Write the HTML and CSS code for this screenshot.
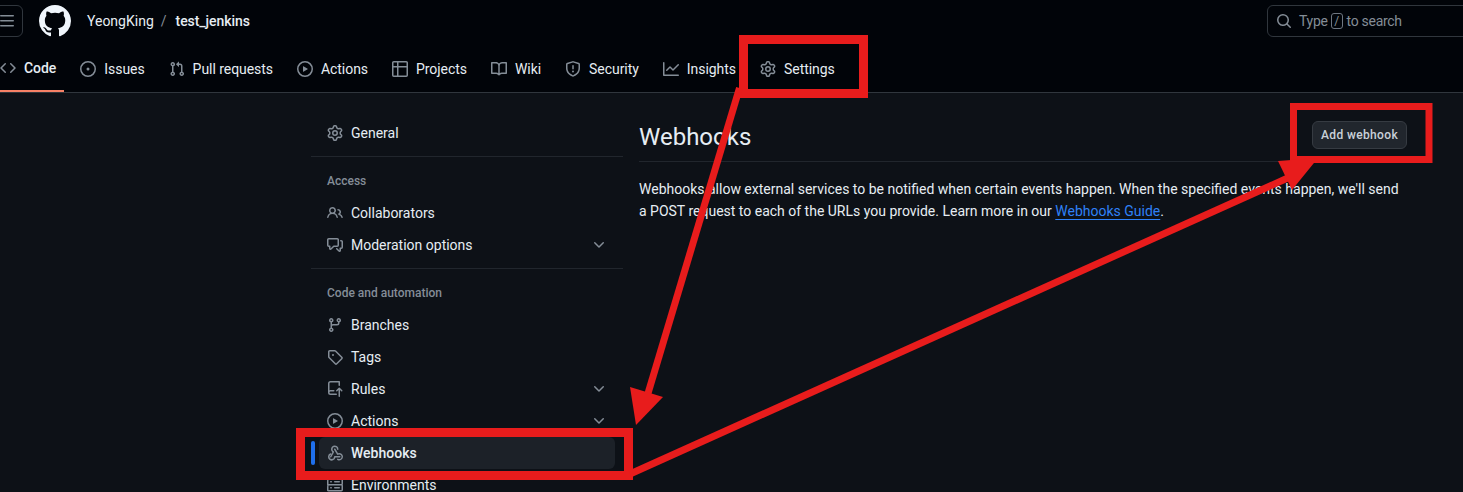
FILE: index.html
```html
<!DOCTYPE html>
<html lang="en">
<head>
  <meta charset="UTF-8">
  <title>Webhooks · YeongKing/test_jenkins</title>
  <link rel="stylesheet" href="styles.css">
</head>
<body>
  <!-- Icon sprite -->
  <svg class="sprite" width="0" height="0">
    <symbol id="i-bars" viewBox="0 0 16 16"><path d="M1 2.75A.75.75 0 0 1 1.75 2h12.5a.75.75 0 0 1 0 1.5H1.75A.75.75 0 0 1 1 2.75Zm0 5A.75.75 0 0 1 1.75 7h12.5a.75.75 0 0 1 0 1.5H1.75A.75.75 0 0 1 1 7.75ZM1.75 12h12.5a.75.75 0 0 1 0 1.5H1.75a.75.75 0 0 1 0-1.5Z"/></symbol>
    <symbol id="i-github" viewBox="0 0 16 16"><path d="M8 0c4.42 0 8 3.58 8 8a8.013 8.013 0 0 1-5.45 7.59c-.4.08-.55-.17-.55-.38 0-.27.01-1.13.01-2.2 0-.75-.25-1.23-.54-1.48 1.78-.2 3.65-.88 3.65-3.95 0-.88-.31-1.59-.82-2.15.08-.2.36-1.02-.08-2.12 0 0-.67-.22-2.2.82-.64-.18-1.32-.27-2-.27-.68 0-1.36.09-2 .27-1.53-1.03-2.2-.82-2.2-.82-.44 1.1-.16 1.92-.08 2.12-.51.56-.82 1.28-.82 2.15 0 3.06 1.86 3.75 3.64 3.95-.23.2-.44.55-.51 1.07-.46.21-1.61.55-2.33-.66-.15-.24-.6-.83-1.23-.82-.67.01-.27.38.01.53.34.19.73.9.82 1.13.16.45.68 1.31 2.69.94 0 .67.01 1.3.01 1.49 0 .21-.15.45-.55.38A7.995 7.995 0 0 1 0 8c0-4.42 3.58-8 8-8Z"/></symbol>
    <symbol id="i-search" viewBox="0 0 16 16"><path d="M10.68 11.74a6 6 0 0 1-7.922-8.982 6 6 0 0 1 8.982 7.922l3.04 3.04a.749.749 0 0 1-.326 1.275.749.749 0 0 1-.734-.215ZM11.5 7a4.499 4.499 0 1 0-8.997 0A4.499 4.499 0 0 0 11.5 7Z"/></symbol>
    <symbol id="i-code" viewBox="0 0 16 16"><path d="m11.28 3.22 4.25 4.25a.75.75 0 0 1 0 1.06l-4.25 4.25a.749.749 0 0 1-1.275-.326.749.749 0 0 1 .215-.734L13.94 8l-3.72-3.72a.749.749 0 0 1 .326-1.275.749.749 0 0 1 .734.215Zm-6.56 0a.751.751 0 0 1 1.042.018.751.751 0 0 1 .018 1.042L2.06 8l3.72 3.72a.749.749 0 0 1-.326 1.275.749.749 0 0 1-.734-.215L.47 8.53a.75.75 0 0 1 0-1.06Z"/></symbol>
    <symbol id="i-issue" viewBox="0 0 16 16"><path d="M8 9.5a1.5 1.5 0 1 0 0-3 1.5 1.5 0 0 0 0 3Z"/><path d="M8 0a8 8 0 1 1 0 16A8 8 0 0 1 8 0ZM1.5 8a6.5 6.5 0 1 0 13 0 6.5 6.5 0 0 0-13 0Z"/></symbol>
    <symbol id="i-pull" viewBox="0 0 16 16"><path d="M1.5 3.25a2.25 2.25 0 1 1 3 2.122v5.256a2.251 2.251 0 1 1-1.5 0V5.372A2.25 2.25 0 0 1 1.5 3.25Zm5.677-.177L9.573.677A.25.25 0 0 1 10 .854V2.5h1A2.5 2.5 0 0 1 13.5 5v5.628a2.251 2.251 0 1 1-1.5 0V5a1 1 0 0 0-1-1h-1v1.646a.25.25 0 0 1-.427.177L7.177 3.427a.25.25 0 0 1 0-.354ZM3.75 2.5a.75.75 0 1 0 0 1.5.75.75 0 0 0 0-1.5Zm0 9.5a.75.75 0 1 0 0 1.5.75.75 0 0 0 0-1.5Zm8.25.75a.75.75 0 1 0 1.5 0 .75.75 0 0 0-1.5 0Z"/></symbol>
    <symbol id="i-play" viewBox="0 0 16 16"><path d="M8 0a8 8 0 1 1 0 16A8 8 0 0 1 8 0ZM1.5 8a6.5 6.5 0 1 0 13 0 6.5 6.5 0 0 0-13 0Zm4.879-2.773 4.264 2.559a.25.25 0 0 1 0 .428l-4.264 2.559A.25.25 0 0 1 6 10.559V5.442a.25.25 0 0 1 .379-.215Z"/></symbol>
    <symbol id="i-table" viewBox="0 0 16 16"><path d="M0 1.75C0 .784.784 0 1.75 0h12.5C15.216 0 16 .784 16 1.75v12.5A1.75 1.75 0 0 1 14.25 16H1.75A1.75 1.75 0 0 1 0 14.25ZM6.5 6.5v8h7.75a.25.25 0 0 0 .25-.25V6.5Zm8-1.5V1.75a.25.25 0 0 0-.25-.25H6.5V5Zm-13 1.5v7.75c0 .138.112.25.25.25H5v-8ZM5 5V1.5H1.75a.25.25 0 0 0-.25.25V5Z"/></symbol>
    <symbol id="i-book" viewBox="0 0 16 16"><path d="M0 1.75A.75.75 0 0 1 .75 1h4.253c1.227 0 2.317.59 3 1.501A3.743 3.743 0 0 1 11.006 1h4.245a.75.75 0 0 1 .75.75v10.5a.75.75 0 0 1-.75.75h-4.507a2.25 2.25 0 0 0-1.591.659l-.622.621a.75.75 0 0 1-1.06 0l-.622-.621A2.25 2.25 0 0 0 5.258 13H.75a.75.75 0 0 1-.75-.75Zm7.251 10.324.004-5.073-.002-2.253A2.25 2.25 0 0 0 5.003 2.5H1.5v9h3.757a3.75 3.75 0 0 1 1.994.574ZM8.755 4.75l-.004 7.322a3.752 3.752 0 0 1 1.992-.572H14.5v-9h-3.495a2.25 2.25 0 0 0-2.25 2.25Z"/></symbol>
    <symbol id="i-shield" viewBox="0 0 16 16"><path d="M7.467.133a1.748 1.748 0 0 1 1.066 0l5.25 1.68A1.75 1.75 0 0 1 15 3.48V7c0 1.566-.32 3.182-1.303 4.682-.983 1.498-2.585 2.813-5.032 3.855a1.697 1.697 0 0 1-1.33 0c-2.447-1.042-4.049-2.357-5.032-3.855C1.32 10.182 1 8.566 1 7V3.48a1.75 1.75 0 0 1 1.217-1.667Zm.61 1.429a.25.25 0 0 0-.153 0l-5.25 1.68a.25.25 0 0 0-.174.238V7c0 1.358.275 2.666 1.057 3.86.784 1.194 2.121 2.34 4.366 3.297a.196.196 0 0 0 .154 0c2.245-.956 3.582-2.104 4.366-3.298C13.225 9.666 13.5 8.36 13.5 7V3.48a.251.251 0 0 0-.174-.237l-5.25-1.68ZM8.75 4.75v3a.75.75 0 0 1-1.5 0v-3a.75.75 0 0 1 1.5 0ZM9 10.5a1 1 0 1 1-2 0 1 1 0 0 1 2 0Z"/></symbol>
    <symbol id="i-graph" viewBox="0 0 16 16"><path d="M1.5 1.75V13.5h13.75a.75.75 0 0 1 0 1.5H.75a.75.75 0 0 1-.75-.75V1.75a.75.75 0 0 1 1.5 0Zm14.28 2.53-5.25 5.25a.75.75 0 0 1-1.06 0L7 7.06 4.28 9.78a.751.751 0 0 1-1.042-.018.751.751 0 0 1-.018-1.042l3.25-3.25a.75.75 0 0 1 1.06 0L10 7.94l4.72-4.72a.751.751 0 0 1 1.042.018.751.751 0 0 1 .018 1.042Z"/></symbol>
    <symbol id="i-gear" viewBox="0 0 16 16"><path d="M8 0a8.2 8.2 0 0 1 .701.031C9.444.095 9.99.645 10.16 1.29l.288 1.107c.018.066.079.158.212.224.231.114.454.243.668.386.123.082.233.09.299.071l1.103-.303c.644-.176 1.392.021 1.82.63.27.385.506.792.704 1.218.315.675.111 1.422-.364 1.891l-.814.806c-.049.048-.098.147-.088.294.016.257.016.515 0 .772-.01.147.038.246.088.294l.814.806c.475.469.679 1.216.364 1.891a7.977 7.977 0 0 1-.704 1.217c-.428.61-1.176.807-1.82.63l-1.102-.302c-.067-.019-.177-.011-.3.071a5.909 5.909 0 0 1-.668.386c-.133.066-.194.158-.211.224l-.29 1.106c-.168.646-.715 1.196-1.458 1.26a8.006 8.006 0 0 1-1.402 0c-.743-.064-1.289-.614-1.458-1.26l-.289-1.106c-.018-.066-.079-.158-.212-.224a5.738 5.738 0 0 1-.668-.386c-.123-.082-.233-.09-.299-.071l-1.103.303c-.644.176-1.392-.021-1.82-.63a8.12 8.12 0 0 1-.704-1.218c-.315-.675-.111-1.422.363-1.891l.815-.806c.05-.048.098-.147.088-.294a6.214 6.214 0 0 1 0-.772c.01-.147-.038-.246-.088-.294l-.815-.806C.635 6.045.431 5.298.746 4.623a7.92 7.92 0 0 1 .704-1.217c.428-.61 1.176-.807 1.82-.63l1.102.302c.067.019.177.011.3-.071.214-.143.437-.272.668-.386.133-.066.194-.158.211-.224l.29-1.106C6.009.645 6.556.095 7.299.03 7.53.01 7.764 0 8 0Zm-.571 1.525c-.036.003-.108.036-.137.146l-.289 1.105c-.147.561-.549.967-.998 1.189-.173.086-.34.183-.5.29-.417.278-.97.423-1.529.27l-1.103-.303c-.109-.03-.175.016-.195.045-.22.312-.412.644-.573.99-.014.031-.021.11.059.19l.815.806c.411.406.562.957.53 1.456a4.709 4.709 0 0 0 0 .582c.032.499-.119 1.05-.53 1.456l-.815.806c-.081.08-.073.159-.059.19.162.346.353.677.573.989.02.03.085.076.195.046l1.102-.303c.56-.153 1.113-.008 1.53.27.161.107.328.204.501.29.447.222.85.629.997 1.189l.289 1.105c.029.109.101.143.137.146a6.6 6.6 0 0 0 1.142 0c.036-.003.108-.036.137-.146l.289-1.105c.147-.561.549-.967.998-1.189.173-.086.34-.183.5-.29.417-.278.97-.423 1.529-.27l1.103.303c.109.029.175-.016.195-.045.22-.313.411-.644.573-.99.014-.031.021-.11-.059-.19l-.815-.806c-.411-.406-.562-.957-.53-1.456a4.709 4.709 0 0 0 0-.582c-.032-.499.119-1.05.53-1.456l.815-.806c.081-.08.073-.159.059-.19a6.464 6.464 0 0 0-.573-.989c-.02-.03-.085-.076-.195-.046l-1.102.303c-.56.153-1.113.008-1.53-.27a4.44 4.44 0 0 0-.501-.29c-.447-.222-.85-.629-.997-1.189l-.289-1.105c-.029-.11-.101-.143-.137-.146a6.6 6.6 0 0 0-1.142 0ZM11 8a3 3 0 1 1-6 0 3 3 0 0 1 6 0ZM9.5 8a1.5 1.5 0 1 0-3.001.001A1.5 1.5 0 0 0 9.5 8Z"/></symbol>
    <symbol id="i-people" viewBox="0 0 16 16"><path d="M2 5.5a3.5 3.5 0 1 1 5.898 2.549 5.508 5.508 0 0 1 3.034 4.084.75.75 0 1 1-1.482.235 4 4 0 0 0-7.9 0 .75.75 0 0 1-1.482-.236A5.507 5.507 0 0 1 3.102 8.05 3.493 3.493 0 0 1 2 5.5ZM11 4a3.001 3.001 0 0 1 2.22 5.018 5.01 5.01 0 0 1 2.56 3.012.749.749 0 0 1-.885.954.752.752 0 0 1-.549-.514 3.507 3.507 0 0 0-2.522-2.372.75.75 0 0 1-.574-.73v-.352a.75.75 0 0 1 .416-.672A1.5 1.5 0 0 0 11 5.5.75.75 0 0 1 11 4Zm-5.5-.5a2 2 0 1 0-.001 3.999A2 2 0 0 0 5.5 3.5Z"/></symbol>
    <symbol id="i-comment" viewBox="0 0 16 16"><path d="M1.75 1h8.5c.966 0 1.75.784 1.75 1.75v5.5A1.75 1.75 0 0 1 10.25 10H7.061l-2.574 2.573A1.458 1.458 0 0 1 2 11.543V10h-.25A1.75 1.75 0 0 1 0 8.25v-5.5C0 1.784.784 1 1.75 1ZM1.5 2.75v5.5c0 .138.112.25.25.25h1a.75.75 0 0 1 .75.75v2.19l2.72-2.72a.749.749 0 0 1 .53-.22h3.5a.25.25 0 0 0 .25-.25v-5.5a.25.25 0 0 0-.25-.25h-8.5a.25.25 0 0 0-.25.25Zm13 2a.25.25 0 0 0-.25-.25h-.5a.75.75 0 0 1 0-1.5h.5c.966 0 1.75.784 1.75 1.75v5.5A1.75 1.75 0 0 1 14.25 12H14v1.543a1.458 1.458 0 0 1-2.487 1.03L9.22 12.28a.749.749 0 0 1 .326-1.275.749.749 0 0 1 .734.215l2.22 2.22v-2.19a.75.75 0 0 1 .75-.75h1a.25.25 0 0 0 .25-.25Z"/></symbol>
    <symbol id="i-branch" viewBox="0 0 16 16"><path d="M9.5 3.25a2.25 2.25 0 1 1 3 2.122V6A2.5 2.5 0 0 1 10 8.5H6a1 1 0 0 0-1 1v1.128a2.251 2.251 0 1 1-1.5 0V5.372a2.25 2.25 0 1 1 1.5 0v1.836A2.493 2.493 0 0 1 6 7h4a1 1 0 0 0 1-1v-.628A2.25 2.25 0 0 1 9.5 3.25Zm-6 0a.75.75 0 1 0 1.5 0 .75.75 0 0 0-1.5 0Zm8.25-.75a.75.75 0 1 0 0 1.5.75.75 0 0 0 0-1.5ZM4.25 12a.75.75 0 1 0 0 1.5.75.75 0 0 0 0-1.5Z"/></symbol>
    <symbol id="i-tag" viewBox="0 0 16 16"><path d="M1 7.775V2.75C1 1.784 1.784 1 2.75 1h5.025c.464 0 .91.184 1.238.513l6.25 6.25a1.75 1.75 0 0 1 0 2.474l-5.026 5.026a1.75 1.75 0 0 1-2.474 0l-6.25-6.25A1.752 1.752 0 0 1 1 7.775Zm1.5 0c0 .066.026.13.073.177l6.25 6.25a.25.25 0 0 0 .354 0l5.025-5.025a.25.25 0 0 0 0-.354l-6.25-6.25a.25.25 0 0 0-.177-.073H2.75a.25.25 0 0 0-.25.25ZM6 5a1 1 0 1 1 0 2 1 1 0 0 1 0-2Z"/></symbol>
    <symbol id="i-rules" viewBox="0 0 16 16"><path d="M1 2.5A2.5 2.5 0 0 1 3.5 0h8.75a.75.75 0 0 1 .75.75v3.5a.75.75 0 0 1-1.5 0V1.5h-8a1 1 0 0 0-1 1v6.708A2.493 2.493 0 0 1 3.5 9h3.25a.75.75 0 0 1 0 1.5H3.5a1 1 0 0 0 0 2h5.75a.75.75 0 0 1 0 1.5H3.5A2.5 2.5 0 0 1 1 11.5Zm13.23 7.79h-.001l-1.224-1.224v6.184a.75.75 0 0 1-1.5 0V9.066L10.28 10.29a.75.75 0 0 1-1.06-1.061l2.505-2.504a.75.75 0 0 1 1.06 0L15.29 9.23a.751.751 0 0 1-.018 1.042.751.751 0 0 1-1.042.018Z"/></symbol>
    <symbol id="i-webhook" viewBox="0 0 16 16"><path d="M5.5 4.25a2.25 2.25 0 0 1 4.5 0 .75.75 0 0 0 1.5 0 3.75 3.75 0 1 0-6.14 2.889l-2.272 4.258a.75.75 0 0 0 1.324.706L7 7.25a.75.75 0 0 0-.309-1.015A2.25 2.25 0 0 1 5.5 4.25Z"/><path d="M7.364 3.607a.75.75 0 0 1 1.03.257l2.608 4.349a3.75 3.75 0 1 1-.628 6.785.75.75 0 0 1 .752-1.299 2.25 2.25 0 1 0-.033-3.88.75.75 0 0 1-1.03-.256L7.107 4.636a.75.75 0 0 1 .257-1.03Z"/><path d="M2.5 11.75a2.25 2.25 0 1 0 4.5 0 .75.75 0 0 1 .75-.75h5a.75.75 0 0 1 0 1.5H8.43a3.75 3.75 0 1 1-5.07-4.14.75.75 0 1 1 .54 1.4 2.25 2.25 0 0 0-1.4 1.99Z"/></symbol>
    <symbol id="i-server" viewBox="0 0 16 16"><path d="M1.75 1h12.5c.966 0 1.75.784 1.75 1.75v4c0 .372-.116.717-.314 1 .198.283.314.628.314 1v4a1.75 1.75 0 0 1-1.75 1.75H1.75A1.75 1.75 0 0 1 0 13.75v-4c0-.358.109-.707.314-1a1.739 1.739 0 0 1-.314-1v-4C0 1.784.784 1 1.75 1ZM1.5 2.75v4c0 .138.112.25.25.25h12.5a.25.25 0 0 0 .25-.25v-4a.25.25 0 0 0-.25-.25H1.75a.25.25 0 0 0-.25.25Zm.25 5.75a.25.25 0 0 0-.25.25v4c0 .138.112.25.25.25h12.5a.25.25 0 0 0 .25-.25v-4a.25.25 0 0 0-.25-.25ZM7 4.75A.75.75 0 0 1 7.75 4h4.5a.75.75 0 0 1 0 1.5h-4.5A.75.75 0 0 1 7 4.75ZM7.75 10h4.5a.75.75 0 0 1 0 1.5h-4.5a.75.75 0 0 1 0-1.5ZM3 4.75A.75.75 0 0 1 3.75 4h.5a.75.75 0 0 1 0 1.5h-.5A.75.75 0 0 1 3 4.75ZM3.75 10h.5a.75.75 0 0 1 0 1.5h-.5a.75.75 0 0 1 0-1.5Z"/></symbol>
    <symbol id="i-chevron" viewBox="0 0 16 16"><path d="M12.78 5.22a.749.749 0 0 1 0 1.06l-4.25 4.25a.749.749 0 0 1-1.06 0L3.22 6.28a.749.749 0 1 1 1.06-1.06L8 8.939l3.72-3.719a.749.749 0 0 1 1.06 0Z"/></symbol>
  </svg>

  <header class="app-header">
    <div class="top-row">
      <button class="menu-btn"><svg class="icon"><use href="#i-bars"/></svg></button>
      <svg class="logo"><use href="#i-github"/></svg>
      <nav class="breadcrumb">
        <a>YeongKing</a>
        <span class="slash">/</span>
        <a class="repo">test_jenkins</a>
      </nav>
      <div class="search">
        <svg class="icon"><use href="#i-search"/></svg>
        <span>Type</span><kbd>/</kbd><span>to search</span>
      </div>
    </div>
    <nav class="tabs">
      <a class="tab tab-active"><svg class="icon"><use href="#i-code"/></svg>Code</a>
      <a class="tab"><svg class="icon"><use href="#i-issue"/></svg>Issues</a>
      <a class="tab"><svg class="icon"><use href="#i-pull"/></svg>Pull requests</a>
      <a class="tab"><svg class="icon"><use href="#i-play"/></svg>Actions</a>
      <a class="tab"><svg class="icon"><use href="#i-table"/></svg>Projects</a>
      <a class="tab"><svg class="icon"><use href="#i-book"/></svg>Wiki</a>
      <a class="tab"><svg class="icon"><use href="#i-shield"/></svg>Security</a>
      <a class="tab"><svg class="icon"><use href="#i-graph"/></svg>Insights</a>
      <a class="tab"><svg class="icon"><use href="#i-gear"/></svg>Settings</a>
    </nav>
  </header>

  <div class="layout">
    <aside class="sidebar">
      <a class="side-item"><svg class="icon"><use href="#i-gear"/></svg>General</a>
      <div class="side-divider"></div>
      <div class="side-heading">Access</div>
      <a class="side-item"><svg class="icon"><use href="#i-people"/></svg>Collaborators</a>
      <a class="side-item"><svg class="icon"><use href="#i-comment"/></svg>Moderation options<svg class="icon chevron"><use href="#i-chevron"/></svg></a>
      <div class="side-divider"></div>
      <div class="side-heading">Code and automation</div>
      <a class="side-item"><svg class="icon"><use href="#i-branch"/></svg>Branches</a>
      <a class="side-item"><svg class="icon"><use href="#i-tag"/></svg>Tags</a>
      <a class="side-item"><svg class="icon"><use href="#i-rules"/></svg>Rules<svg class="icon chevron"><use href="#i-chevron"/></svg></a>
      <a class="side-item"><svg class="icon"><use href="#i-play"/></svg>Actions<svg class="icon chevron"><use href="#i-chevron"/></svg></a>
      <a class="side-item side-active"><svg class="icon"><use href="#i-webhook"/></svg>Webhooks</a>
      <a class="side-item"><svg class="icon"><use href="#i-server"/></svg>Environments</a>
    </aside>

    <main class="content">
      <div class="page-head">
        <h1>Webhooks</h1>
        <button class="btn">Add webhook</button>
      </div>
      <p class="intro">Webhooks allow external services to be notified when certain events happen. When the specified events happen, we'll send a POST request to each of the URLs you provide. Learn more in our <a class="link">Webhooks Guide</a>.</p>
    </main>
  </div>

  <!-- Red markup drawn over the screenshot -->
  <svg class="markup" width="1463" height="492" viewBox="0 0 1463 492">
    <g fill="none" stroke="#e81c1c">
      <rect x="743.5" y="39.5" width="120" height="54" stroke-width="9"/>
      <rect x="1293.5" y="106.5" width="135.5" height="53" stroke-width="7"/>
      <rect x="300.5" y="432.5" width="328" height="43" stroke-width="9"/>
      <path d="M739.5 88L647.5 395" stroke-width="7"/>
      <path d="M630 474L1290 177" stroke-width="7"/>
    </g>
    <path fill="#e81c1c" d="M630 387L663 397L636 425Z"/>
    <path fill="#e81c1c" d="M1278 161L1318 158L1292 190Z"/>
  </svg>
</body>
</html>
```

FILE: styles.css
```css
:root {
    --bg-header: #010409;
    --bg-page: #0d1117;
    --border: #30363d;
    --border-dim: #21262d;
    --text: #e6edf3;
    --muted: #848d97;
    --link: #2f81f7;
}

* {
    box-sizing: border-box;
}

html, body {
    height: 492px;
}

body {
    margin: 0;
    overflow: hidden;
    position: relative;
    background: var(--bg-page);
    color: var(--text);
    font-family: "Roboto", "Noto Sans", sans-serif;
    font-size: 14px;
}

.sprite {
    position: absolute;
}

.icon {
    width: 16px;
    height: 16px;
    flex: none;
    fill: var(--muted);
}

/* Header */
.app-header {
    height: 93px;
    padding-top: 5px;
    background: var(--bg-header);
    border-bottom: 1px solid var(--border);
    overflow: hidden;
}

.top-row {
    display: flex;
    align-items: center;
    gap: 16px;
    height: 32px;
}

.menu-btn {
    display: flex;
    align-items: center;
    justify-content: center;
    width: 32px;
    height: 32px;
    margin-left: -9px;
    padding: 0;
    background: none;
    border: 1px solid var(--border);
    border-radius: 6px;
}

.logo {
    width: 32px;
    height: 32px;
    fill: #f0f6fc;
}

.breadcrumb {
    display: flex;
    align-items: center;
    gap: 7px;
    font-size: 14px;
}

.slash {
    color: var(--muted);
    margin-right: 2px;
}

.repo {
    font-weight: 500;
    letter-spacing: -0.05px;
}

.search {
    display: flex;
    align-items: center;
    flex: none;
    width: 240px;
    height: 32px;
    margin-left: auto;
    margin-right: -44px;
    padding-left: 8px;
    color: var(--muted);
    letter-spacing: -0.3px;
    border: 1px solid var(--border);
    border-radius: 6px;
}

.search .icon {
    margin-right: 7px;
}

.search kbd {
    display: flex;
    align-items: center;
    justify-content: center;
    width: 12px;
    height: 16px;
    margin: 0 4px 0 3px;
    font: inherit;
    font-size: 12px;
    border: 1px solid #6e7681;
    border-radius: 3px;
}

.tabs {
    display: flex;
    gap: 8px;
    height: 46px;
    margin: 9px 0 0 -8px;
    letter-spacing: -0.05px;
}

.tab {
    display: flex;
    align-items: center;
    gap: 8px;
    height: 46px;
    padding: 0 8px;
    white-space: nowrap;
}

.tab-active {
    font-weight: 500;
    border-bottom: 2px solid #f78166;
}

/* Page layout */
.layout {
    display: flex;
    gap: 16px;
    padding: 24px 0 0 311px;
}

.sidebar {
    width: 312px;
    flex: none;
}

.side-item {
    display: flex;
    align-items: center;
    gap: 8px;
    height: 32px;
    margin: 0 8px;
    padding: 0 8px;
    border-radius: 6px;
    position: relative;
}

.chevron {
    margin-left: auto;
}

.side-active {
    font-weight: 500;
    background: #1c2128;
}

.side-active::before {
    content: "";
    position: absolute;
    left: -8px;
    top: 4px;
    width: 4px;
    height: 24px;
    border-radius: 6px;
    background: #1f6feb;
}

.side-divider {
    height: 1px;
    margin-top: 7px;
    background: var(--border-dim);
}

.side-heading {
    height: 40px;
    padding: 16px 16px 0;
    font-size: 12px;
    line-height: 16px;
    font-weight: 500;
    color: var(--muted);
}

.content {
    width: 768px;
    flex: none;
}

.page-head {
    display: flex;
    align-items: center;
    justify-content: space-between;
    height: 45px;
    padding: 4px 0 8px;
    border-bottom: 1px solid var(--border-dim);
}

h1 {
    margin: 0;
    font-size: 24px;
    font-weight: 400;
}

.btn {
    align-self: flex-start;
    height: 28px;
    padding: 0 8px;
    color: #c9d1d9;
    font: 500 12px "Roboto", sans-serif;
    letter-spacing: 0.35px;
    background: #21262d;
    border: 1px solid #363b42;
    border-radius: 6px;
}

.intro {
    margin: 16px 0 0;
    line-height: 22px;
}

.link {
    color: var(--link);
    text-decoration: underline;
    text-underline-offset: 3px;
}

.markup {
    position: absolute;
    left: 0;
    top: 0;
    pointer-events: none;
}
```
